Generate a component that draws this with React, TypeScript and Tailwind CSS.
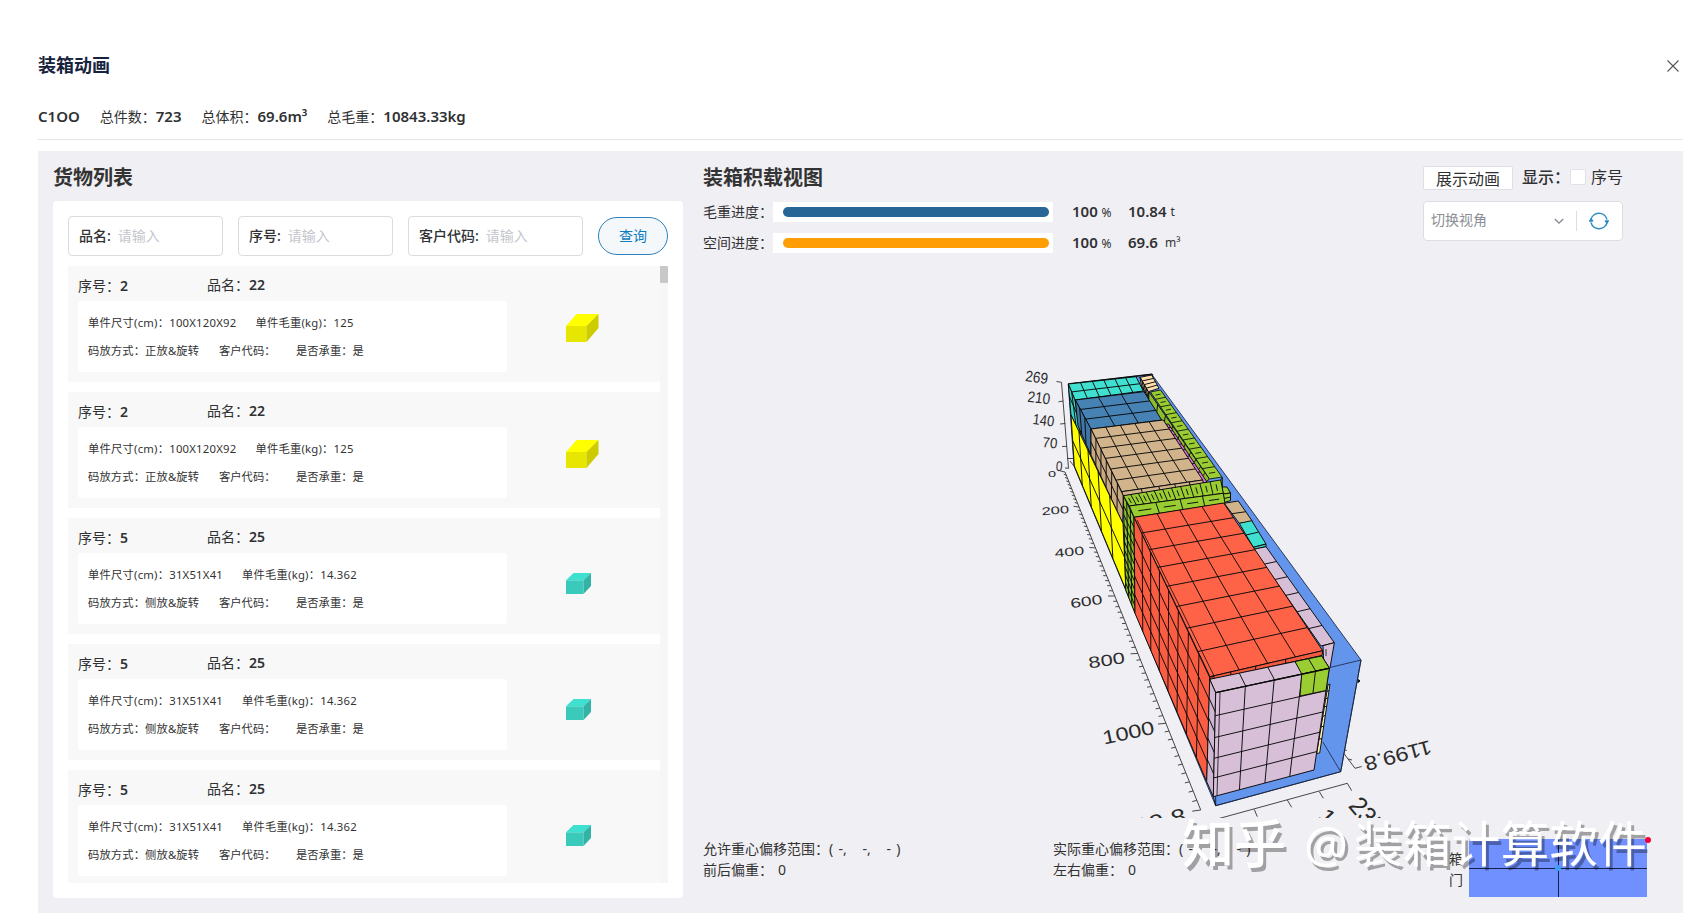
import React, { useState } from 'react'
import clsx from 'clsx'

type Point = [number, number]

interface CargoProps {
    no: string
    name: string
    size: string
    weight: string
    mode: string
    kind: 'yellow' | 'teal'
}

const cargos: CargoProps[] = [
    { no: '2', name: '22', size: '100X120X92', weight: '125', mode: '正放&旋转', kind: 'yellow' },
    { no: '2', name: '22', size: '100X120X92', weight: '125', mode: '正放&旋转', kind: 'yellow' },
    { no: '5', name: '25', size: '31X51X41', weight: '14.362', mode: '侧放&旋转', kind: 'teal' },
    { no: '5', name: '25', size: '31X51X41', weight: '14.362', mode: '侧放&旋转', kind: 'teal' },
    { no: '5', name: '25', size: '31X51X41', weight: '14.362', mode: '侧放&旋转', kind: 'teal' },
]

// maps the unit square onto a quad with perspective
const project = (q: Point[], u: number, v: number): Point => {
    const [[x0, y0], [x1, y1], [x2, y2], [x3, y3]] = q
    const dx1 = x1 - x2, dx2 = x3 - x2, dx3 = x0 - x1 + x2 - x3
    const dy1 = y1 - y2, dy2 = y3 - y2, dy3 = y0 - y1 + y2 - y3
    const det = dx1 * dy2 - dx2 * dy1
    const g = (dx3 * dy2 - dx2 * dy3) / det
    const h = (dx1 * dy3 - dx3 * dy1) / det
    const w = g * u + h * v + 1
    return [
        ((x1 - x0 + g * x1) * u + (x3 - x0 + h * x3) * v + x0) / w,
        ((y1 - y0 + g * y1) * u + (y3 - y0 + h * y3) * v + y0) / w,
    ]
}

const line = (a: Point, b: Point) => `M${a[0].toFixed(2)} ${a[1].toFixed(2)}L${b[0].toFixed(2)} ${b[1].toFixed(2)}`

interface FaceProps {
    q: Point[]
    fill: string
    cols?: number
    rows?: number
    mark?: boolean
    stroke?: number
}

const Face = ({ q, fill, cols = 1, rows = 1, mark, stroke = 0.95 }: FaceProps) => {
    let d = ''
    for (let i = 1; i < cols; i++) d += line(project(q, i / cols, 0), project(q, i / cols, 1))
    for (let j = 1; j < rows; j++) d += line(project(q, 0, j / rows), project(q, 1, j / rows))
    if (mark) {
        for (let i = 0; i < cols; i++) {
            for (let j = 0; j < rows; j++) {
                const u = (i + 0.5) / cols
                const v = (j + 0.5) / rows
                d += cols > 6
                    ? line(project(q, u, v - 0.25), project(q, u, v + 0.25))
                    : line(project(q, u - 0.25 / cols, v), project(q, u + 0.25 / cols, v))
            }
        }
    }
    return (
        <g stroke="#0a0a0a" strokeWidth={stroke} strokeLinejoin="round">
            <polygon points={q.map((p) => p.join(',')).join(' ')} fill={fill} />
            {d && <path d={d} fill="none" />}
        </g>
    )
}

const TEAL = '#40e0d0'
const STEEL = '#4682b4'
const TAN = '#d2b48c'
const GREEN = '#9acd32'
const TOMATO = '#ff6347'
const THISTLE = '#d8bfd8'
const YELLOW = '#ffff00'
const BLUE = '#6495ed'

const faces: FaceProps[] = [
    // far end
    { q: [[1140, 377.3], [1151.7, 375], [1159, 388.3], [1148.3, 391.7]], fill: '#ffdead', rows: 4 },
    { q: [[1140, 377.3], [1148.3, 391.7], [1149.3, 399], [1141.5, 386]], fill: TAN, cols: 4 },
    { q: [[1149, 392], [1209.5, 479], [1206, 482], [1148.5, 403]], fill: '#8dbd2c', cols: 10 },
    { q: [[1150.5, 392], [1160.5, 390], [1222, 477], [1209.5, 479]], fill: GREEN, rows: 10, mark: true, stroke: 0.85 },
    { q: [[1166, 424.3], [1168.5, 424], [1207, 482], [1202.5, 483]], fill: '#da70d6', rows: 10 },
    { q: [[1068.3, 384], [1136, 376.7], [1143.3, 391], [1075, 400]], fill: TEAL, cols: 6, rows: 2 },
    { q: [[1068.3, 384], [1075, 400], [1081, 438], [1071, 415]], fill: '#3cd0c2', cols: 2, rows: 2 },
    { q: [[1075.3, 400], [1144, 391.7], [1161.7, 420], [1091, 429]], fill: STEEL, cols: 3, rows: 3 },
    { q: [[1075.3, 400], [1091, 429], [1091, 455], [1078, 426]], fill: '#3f76a5', cols: 3 },
    { q: [[1091, 429], [1163.3, 420], [1202.7, 480], [1121.7, 491.7]], fill: TAN, cols: 5, rows: 6 },
    { q: [[1121.7, 491.7], [1202.7, 480], [1203.3, 483.5], [1123.3, 496]], fill: TAN, cols: 5 },
    { q: [[1091, 429], [1123.3, 495.7], [1122.7, 523.3], [1091, 455]], fill: '#c8a982', cols: 6, rows: 2 },
    { q: [[1071, 415], [1123, 523.5], [1126, 590], [1074.3, 466]], fill: YELLOW, cols: 5, rows: 2 },
    // green wall
    { q: [[1221.5, 487], [1227, 487], [1230.5, 493], [1223.3, 494]], fill: GREEN },
    { q: [[1223.3, 494], [1230.5, 493], [1230.5, 500.5], [1224.3, 502.5]], fill: GREEN, rows: 2 },
    { q: [[1220.7, 480], [1222.3, 477.5], [1222.3, 491], [1222, 492]], fill: GREEN },
    { q: [[1123.3, 495.7], [1220.7, 480], [1223.3, 493.3], [1129.3, 506]], fill: GREEN, cols: 11, mark: true },
    { q: [[1129.3, 506], [1223.3, 493.3], [1225, 503.3], [1134, 517.3]], fill: GREEN, cols: 4, mark: true },
    { q: [[1123.3, 495.7], [1134, 517.3], [1135, 613.3], [1125.7, 590]], fill: '#8cc02c', cols: 3, rows: 11 },
    // strip beside the red stack
    { q: [[1224.3, 503.3], [1238.3, 501], [1252.7, 521.7], [1239.3, 523.3]], fill: TAN, rows: 2 },
    { q: [[1239.3, 523.3], [1251.7, 520.7], [1266, 544], [1253.3, 547.3]], fill: TEAL, rows: 2 },
    { q: [[1253.3, 547.3], [1266, 544], [1266, 546.7], [1253.6, 549.3]], fill: '#3cd0c2' },
    { q: [[1253.6, 549.3], [1266, 546.7], [1334.3, 642.7], [1321, 646]], fill: THISTLE, rows: 6 },
    { q: [[1323, 645.7], [1334.3, 642.7], [1330, 668], [1324, 669]], fill: THISTLE },
    // red stack
    { q: [[1134, 517.3], [1223.7, 503], [1322.7, 650.7], [1210, 676.7]], fill: TOMATO, cols: 4, rows: 8 },
    { q: [[1134, 517.3], [1210, 678], [1206.7, 781.7], [1135, 613.3]], fill: '#fa5d42', cols: 8, rows: 5 },
    { q: [[1210, 676.7], [1322.7, 650.7], [1322, 655.5], [1209.5, 680]], fill: '#f05a40', cols: 4 },
    // front stack
    { q: [[1209.7, 679.3], [1321.7, 656], [1329.3, 668], [1215.7, 692.7]], fill: THISTLE, cols: 4 },
    { q: [[1295, 661.5], [1321.7, 656], [1329.3, 668], [1301.7, 674]], fill: GREEN, cols: 2 },
    { q: [[1209.7, 679.3], [1215.7, 692.7], [1213.3, 796.7], [1206.7, 781.7]], fill: '#cfb6d2', rows: 5 },
    { q: [[1328, 685], [1330, 684], [1319.7, 753], [1316.7, 753.5]], fill: '#ffeeb0', rows: 7 },
    { q: [[1215.7, 692.7], [1329.3, 668.3], [1314, 770], [1213.3, 796.7]], fill: THISTLE, cols: 4, rows: 5 },
    { q: [[1301.7, 674.3], [1329.3, 668.3], [1326, 690.5], [1300, 696]], fill: GREEN, cols: 2 },
]

// length axis, 0 .. 1199.8
const axisPoint = (t: number): Point => {
    const w = 1 - 0.4206 * t
    return [(1065 - 369.3 * t) / w, (472 - 2.7 * t) / w]
}

const lengthTicks = Array.from({ length: 61 }, (_, i) => {
    const t = i / 60
    const [x, y] = axisPoint(t)
    const len = (i % 10 === 0 ? 5 : 2.6) + t * (i % 10 === 0 ? 3.5 : 2)
    return line([x, y], [x - len, y + (t - 0.5) * 2.4])
}).join('')

// text, centre x, centre y, font size, horizontal stretch, rotation
const labels: [string, number, number, number, number, number][] = [
    ['269', 1036.8, 377, 15.5, 0.88, 8],
    ['210', 1039, 397.5, 15.5, 0.88, 7],
    ['140', 1043.5, 420, 15, 0.86, 7],
    ['70', 1050, 442.5, 14.5, 0.92, 6],
    ['0', 1059.2, 466, 14, 0.85, 5],
    ['0', 1052, 473.8, 8.5, 1.7, -8],
    ['200', 1055.3, 510.2, 11, 1.5, -5],
    ['400', 1069.3, 551.6, 12, 1.48, -6],
    ['600', 1086.3, 601.2, 13.5, 1.44, -8],
    ['800', 1106.5, 660, 16, 1.37, -9],
    ['1000', 1128.3, 732.3, 19, 1.24, -12],
    ['1199.8', 1146.5, 824, 22, 1.22, -13],
    ['1199.8', 1398, 755.8, 20, 1.16, 165],
    ['235', 1367.5, 815.5, 26, 0.92, 50],
    ['117.5', 1343, 833, 22, 1.1, 47],
]

const LoadScene = () => (
    <svg className="block h-[558px] w-[897px]" viewBox="703 260 897 558">
        <polygon
            points="1068.3,384 1151.7,374.3 1361,660 1340.7,771.7 1215.7,805.7 1074,466"
            fill={BLUE}
            stroke="#1b2a4a"
            strokeWidth="0.9"
        />
        <path d="M1068.3 384L1151.7 374.3L1153 375.5" stroke="#111" strokeWidth="1.4" fill="none" />
        <path
            d="M1361 660L1330.7 667.3M1340.7 771.7L1322.7 741.7M1361 660L1340.7 771.7L1215.7 805.7"
            stroke="#17233d"
            strokeWidth="0.8"
            fill="none"
        />
        {faces.map((f, i) => (
            <Face key={i} {...f} />
        ))}
        <g stroke="#0a0a0a" strokeWidth="0.8" fill="none">
            <path d="M1137 520L1214 675.8L1209.7 679.3M1220 692L1217 795.5M1214 676L1214 679M1326 649V656" />
            <path d="M1215.7 692.7L1329.3 668.3" strokeWidth="1.3" />
            <path d="M1213.3 796.7L1215.7 805.7V796" />
        </g>
        <path d="M1358.5 679.5L1358 682.5L1360 681ZM1345 749.5L1346.5 751" fill="#111" stroke="#111" strokeWidth="1" />
        <g stroke="#333" strokeWidth="0.9" fill="none">
            <path d="M1056.5 381.5L1061.5 382.3L1068.5 468.3L1065 468M1058.5 401.8L1063.3 401M1060 424L1065.2 423.5M1062 446.5L1067 446.3M1067 458.5L1073.5 458.5M1070 461L1074 466" />
            <path d={line(axisPoint(0), axisPoint(1))} />
            <path d={lengthTicks} />
            <path d="M1218 818.8L1347.3 783.3L1351.7 790.7M1319.3 791.7L1323.3 798.3M1287.3 800L1291.7 807.3M1254.3 809.5L1257.3 816.7" />
            <path d="M1344.3 754L1355 768.3L1361.7 766.5M1348.3 759L1352 760" />
        </g>
        {labels.map(([text, x, y, size, sx, rot], i) => (
            <text
                key={i}
                transform={`translate(${x} ${y}) rotate(${rot}) scale(${sx} 1)`}
                fontSize={size}
                y={size * 0.36}
                textAnchor="middle"
                fill="#2b2b2b"
                fontFamily="'Liberation Sans', sans-serif"
            >
                {text}
            </text>
        ))}
    </svg>
)

const YellowBox = () => (
    <svg className="h-[28px] w-[33px]" viewBox="0 0 33 28">
        <path d="M0 12L10.5 0H32.5L20.5 12Z" fill="#ffff00" />
        <path d="M0 12H20.5V28H0Z" fill="#e6e600" />
        <path d="M20.5 12L32.5 0V14L20.5 28Z" fill="#cccc00" />
    </svg>
)

const TealBox = () => (
    <svg className="h-[21px] w-[25px]" viewBox="0 0 25 21">
        <path d="M0 7.3L7.5 0H25L17.5 7.3Z" fill="#40e0d0" />
        <path d="M0 7.3H17.5V21H0Z" fill="#3acabb" />
        <path d="M17.5 7.3L25 0V13L17.5 21Z" fill="#33b3a6" />
    </svg>
)

const CargoCard = ({ no, name, size, weight, mode, kind }: CargoProps) => (
    <div className="flex h-[116px] shrink-0 bg-[#f8f8f8] pl-[10px]">
        <div className="w-[429px]">
            <div className="flex h-[35px] pt-[9px] text-sm leading-5 text-[#303133]">
                <div className="w-[129px] pt-px">
                    序号：<b className="font-semibold">{no}</b>
                </div>
                <div>
                    品名：<b className="font-semibold">{name}</b>
                </div>
            </div>
            <div className="h-[71px] rounded-[3px] bg-white px-[10px] pt-2 text-[11.3px] leading-[28px] text-[#333]">
                <div className="flex gap-[19px] whitespace-nowrap tracking-[0.22px]">
                    <span>单件尺寸(cm)：{size}</span>
                    <span>单件毛重(kg)：{weight}</span>
                </div>
                <div className="flex whitespace-nowrap">
                    <span className="w-[131px] tracking-[0.12px]">码放方式：{mode}</span>
                    <span className="w-[77px]">客户代码：</span>
                    <span>是否承重：是</span>
                </div>
            </div>
        </div>
        <div className={clsx('pl-[59px]', kind === 'yellow' ? 'pt-[48px]' : 'pt-[55px]')}>
            {kind === 'yellow' ? <YellowBox /> : <TealBox />}
        </div>
    </div>
)

const SearchField = ({ label, className }: { label: string; className: string }) => (
    <label className={clsx('flex h-10 items-center rounded-[4px] border border-[#d9dbe0] bg-white pl-[10px] text-sm text-[#303133]', className)}>
        <span className="shrink-0 font-medium">{label}:</span>
        <input className="ml-[7px] w-[60px] outline-none placeholder:text-[#c3c6cc]" placeholder="请输入" />
    </label>
)

interface ProgressProps {
    label: string
    color: string
    value: string
    unit: string
}

const ProgressRow = ({ label, color, value, unit }: ProgressProps) => (
    <div className="flex h-5 items-center text-sm text-[#303133]">
        <span className="w-[70px] whitespace-nowrap">{label}：</span>
        <div className="flex h-5 w-[280px] items-center bg-white pl-[10px]">
            <div className={clsx('h-[10px] w-[266px] rounded-full', color)} />
        </div>
        <div className="ml-[19px] w-[56px]">
            <b className="text-[15px] font-semibold">100</b> <span className="text-xs">%</span>
        </div>
        <b className="text-[15px] font-semibold">{value}</b>
        <span className="ml-1 whitespace-pre text-xs">{unit}</span>
    </div>
)

const Offset = ({ title, side }: { title: string; side: string }) => (
    <div className="w-[350px] text-sm leading-[21px] text-[#333]">
        <div className="flex whitespace-nowrap">
            <span>{title}：</span>
            <span className="whitespace-pre [word-spacing:1.6px]">{'( -,   -,   - )'}</span>
        </div>
        <div>
            {side}：<span className="ml-[5px]">0</span>
        </div>
    </div>
)

const Stat = ({ label, value }: { label: string; value: string }) => (
    <span>
        {label}：<b className="text-[15px] font-semibold">{value}</b>
    </span>
)

export default function App() {
    const [showNo, setShowNo] = useState(false)

    return (
        <div className="relative h-[914px] w-[1690px] overflow-hidden bg-white pl-[38px] pr-[7px] font-['Noto_Sans','Noto_Sans_CJK_SC',sans-serif]">
            <div className="flex h-[99px] items-center justify-between pr-1 pt-[31px]">
                <h1 className="text-lg font-bold text-[#17233d]">装箱动画</h1>
                <svg className="mt-px h-3 w-3" viewBox="0 0 12 12" stroke="#555" strokeWidth="1.1">
                    <path d="M0.5 0.5L11.5 11.5M11.5 0.5L0.5 11.5" />
                </svg>
            </div>
            <div className="flex h-[41px] gap-5 border-b border-[#e4e6ea] pt-[7px] text-sm leading-5 text-[#303133]">
                <b className="text-[15px] font-semibold leading-5">C1OO</b>
                <Stat label="总件数" value="723" />
                <Stat label="总体积" value="69.6m³" />
                <Stat label="总毛重" value="10843.33kg" />
            </div>

            <div className="mt-[11px] flex h-[762px] bg-[#f0eff4] pl-[15px]">
                <div className="w-[630px]">
                    <h2 className="flex h-[50px] items-center pt-[3px] text-xl font-bold text-[#333]">货物列表</h2>
                    <div className="h-[697px] rounded-[4px] bg-white px-[15px] pt-[15px]">
                        <div className="flex gap-[15px]">
                            <SearchField label="品名" className="w-[155px]" />
                            <SearchField label="序号" className="w-[155px]" />
                            <SearchField label="客户代码" className="w-[175px]" />
                            <button className="mt-px h-[38px] w-[70px] rounded-[19px] border border-[#2c82b8] bg-[#f5f8fa] text-sm text-[#0d7cc0]">
                                查询
                            </button>
                        </div>
                        <div className="mt-[10px] flex h-[617px] overflow-hidden">
                            <div className="flex w-[592px] flex-col gap-[10px]">
                                {cargos.map((c, i) => (
                                    <CargoCard key={i} {...c} />
                                ))}
                            </div>
                            <div className="w-2 bg-[#f6f6f6]">
                                <div className="h-[17px] rounded-[1px] bg-[#c8c8c8]" />
                            </div>
                        </div>
                    </div>
                </div>

                <div className="ml-5 flex w-[980px] flex-col">
                    <div className="flex h-[109px] justify-between pr-[60px]">
                        <div>
                            <h2 className="flex h-[51px] items-center pt-[2px] text-xl font-bold text-[#333]">装箱积载视图</h2>
                            <div className="flex flex-col gap-[11px]">
                                <ProgressRow label="毛重进度" color="bg-[#286695]" value="10.84" unit="t" />
                                <ProgressRow label="空间进度" color="bg-[#ff9d05]" value="69.6" unit=" m³" />
                            </div>
                        </div>
                        <div className="w-[200px] pt-[15px]">
                            <div className="flex h-6 whitespace-nowrap text-base leading-[22px] text-[#303133]">
                                <button className="h-6 w-[90px] shrink-0 rounded-[2px] border border-[#dcdfe6] bg-white leading-[24px]">
                                    展示动画
                                </button>
                                <span className="ml-[9px] w-[48px] shrink-0 font-medium">显示：</span>
                                <label className="flex h-[21px] items-center gap-[5px]">
                                    <input
                                        type="checkbox"
                                        checked={showNo}
                                        onChange={() => setShowNo(!showNo)}
                                        className="h-4 w-4 shrink-0 appearance-none rounded-[2px] border border-[#e0e2e8] bg-white"
                                    />
                                    序号
                                </label>
                            </div>
                            <div className="mt-[11px] flex h-10 items-center rounded-[4px] border border-[#dcdee2] bg-white text-sm text-[#8b8e94]">
                                <span className="w-[122px] pb-[3px] pl-[7px]">切换视角</span>
                                <svg className="ml-2 h-2 w-[10px]" viewBox="0 0 10 8" fill="none" stroke="#808695" strokeWidth="1.3">
                                    <path d="M0.8 2L5 6.2L9.2 2" />
                                </svg>
                                <div className="ml-3 h-5 w-px bg-[#dcdee2]" />
                                <svg className="ml-3 h-5 w-5" viewBox="0 0 20 20" fill="none" stroke="#2d8cc0" strokeWidth="1.5">
                                    <path d="M1.8 9A8.3 8.3 0 0 1 18 8.5" />
                                    <path d="M18.2 11A8.3 8.3 0 0 1 2 11.5" />
                                    <path d="M0 11L2 7.6L4.4 10.6Z" fill="#2d8cc0" stroke="none" />
                                    <path d="M15.6 9.4L18 12.4L20 9Z" fill="#2d8cc0" stroke="none" />
                                    <path d="M0.3 10.2L2 8.2L4 10M16 9.8L18 11.8L19.7 9.8" strokeWidth="1.2" />
                                </svg>
                            </div>
                        </div>
                    </div>
                    <LoadScene />
                    <div className="flex h-[95px] pt-5">
                        <Offset title="允许重心偏移范围" side="前后偏重" />
                        <Offset title="实际重心偏移范围" side="左右偏重" />
                        <div className="ml-[46px] mt-[10px] w-[14px] text-sm leading-[21px] text-[#333]">箱门</div>
                        <svg className="ml-[6px] mt-[-2px] h-[61px] w-[184px] shrink-0" viewBox="1469 836 184 61">
                            <path d="M1469 839H1647V897H1469Z" fill="#7090ff" />
                            <path d="M1469 868.5H1647M1558.5 839V897" stroke="#16204a" />
                            <circle cx="1558" cy="868" r="3" fill="#409eff" />
                            <circle cx="1648" cy="840" r="3" fill="#f5003c" />
                        </svg>
                    </div>
                </div>
            </div>

            <div className="pointer-events-none absolute left-[1182px] top-[808px] flex whitespace-nowrap leading-[70px] text-white [text-shadow:3px_4px_0_rgba(0,0,0,0.33)]">
                <span className="w-[122px] text-[52px] font-medium">知乎</span>
                <span className="w-[50px] text-[49px]">@</span>
                <span className="text-[48.8px]">装箱计算软件</span>
            </div>
        </div>
    )
}
